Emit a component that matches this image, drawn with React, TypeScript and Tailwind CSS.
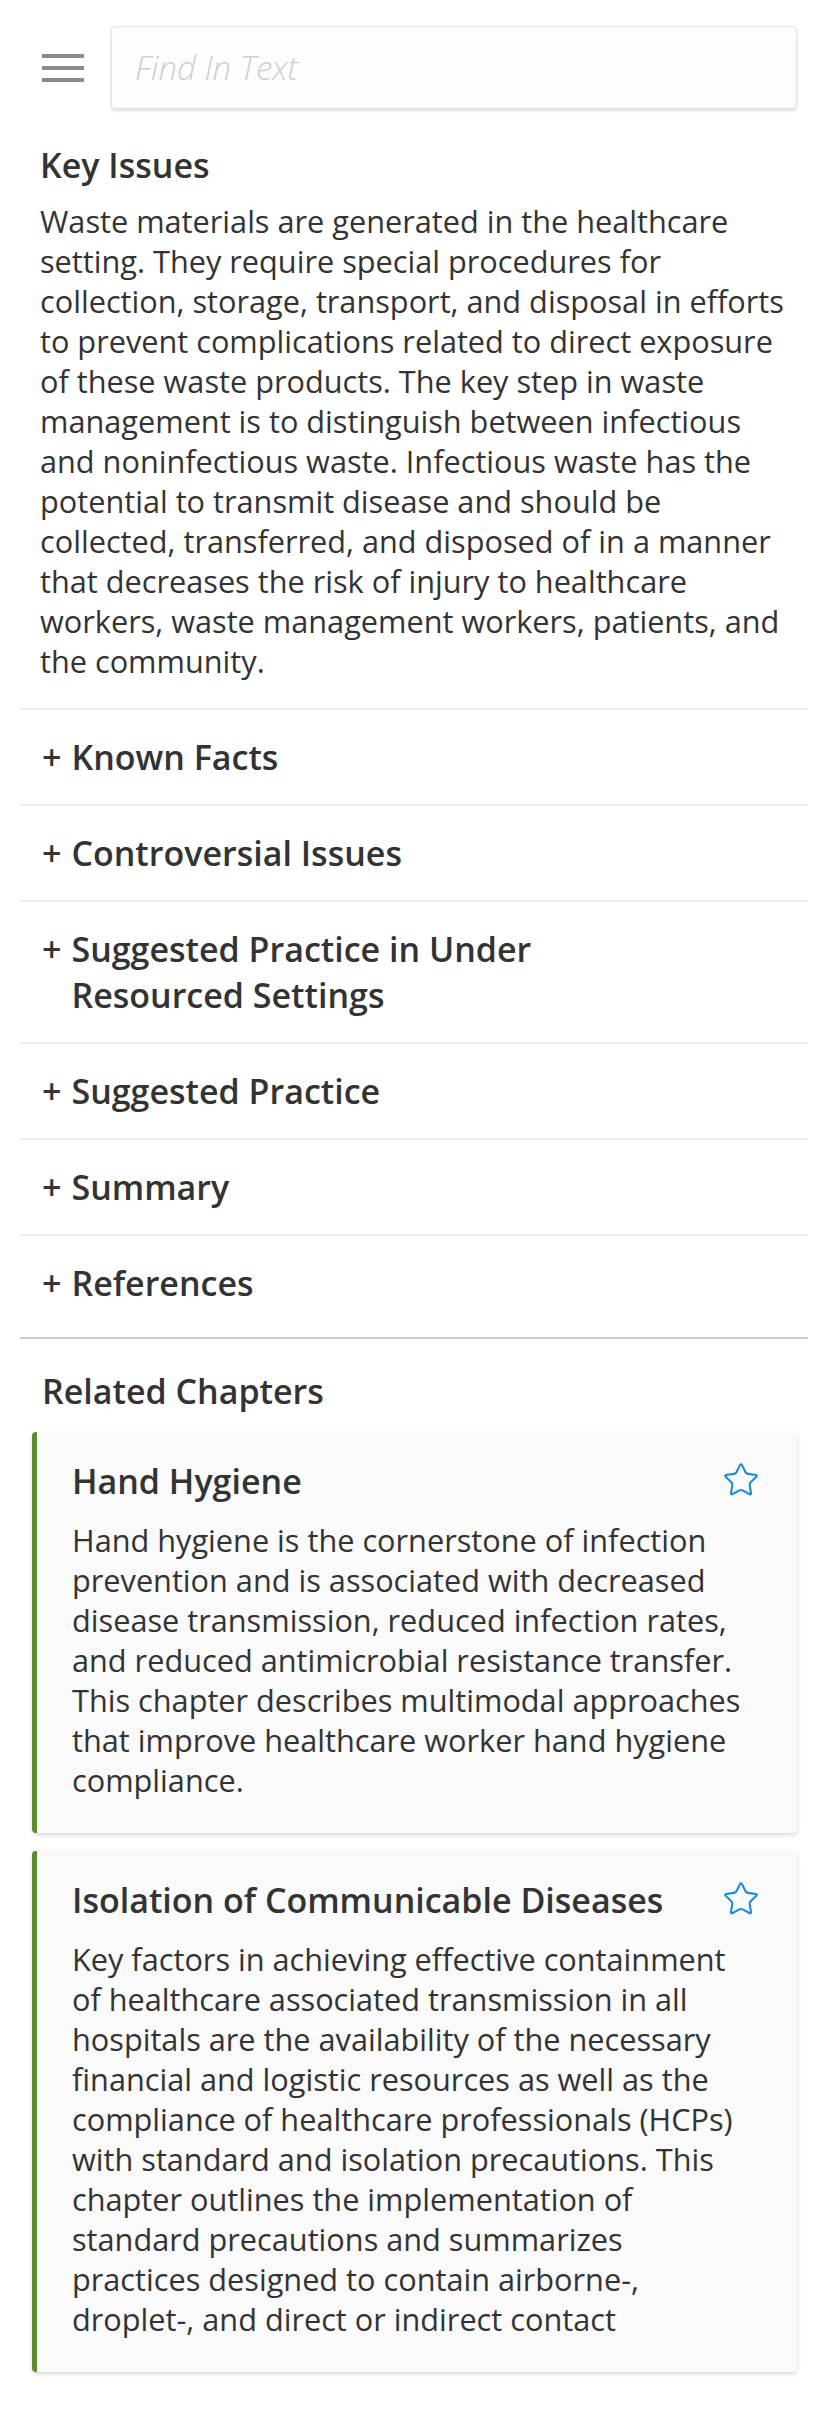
import { Star } from 'lucide-react';

const sections = [
  'Known Facts',
  'Controversial Issues',
  'Suggested Practice in Under Resourced Settings',
  'Suggested Practice',
  'Summary',
  'References',
];

const chapters = [
  {
    title: 'Hand Hygiene',
    body: 'Hand hygiene is the cornerstone of infection prevention and is associated with decreased disease transmission, reduced infection rates, and reduced antimicrobial resistance transfer. This chapter describes multimodal approaches that improve healthcare worker hand hygiene compliance.',
  },
  {
    title: 'Isolation of Communicable Diseases',
    body: 'Key factors in achieving effective containment of healthcare associated transmission in all hospitals are the availability of the necessary financial and logistic resources as well as the compliance of healthcare professionals (HCPs) with standard and isolation precautions. This chapter outlines the implementation of standard precautions and summarizes practices designed to contain airborne-, droplet-, and direct or indirect contact',
  },
];

function ChapterCard({ title, body }: { title: string; body: string }) {
  return (
    <div className="rounded-[4px] border-l-[5px] border-[#5b8c2a] bg-[#fafafa] pt-[27px] pr-[37px] pb-[33px] pl-[35px] shadow-[0_2px_4px_rgba(0,0,0,0.16)]">
      <div className="flex items-start justify-between gap-4">
        <h3 className="text-[34px] leading-[44px] font-semibold text-[#333]">{title}</h3>
        <Star size={38} strokeWidth={1.3} className="mt-[2px] shrink-0 text-[#1a8cd8]" />
      </div>
      <p className="mt-[17px] mr-[11px] text-[30.7px] leading-[40px] text-[#333]">{body}</p>
    </div>
  );
}

export default function App() {
  return (
    <div className="min-h-screen bg-white font-['Open_Sans',sans-serif] text-[#333]">
      <header className="flex items-center gap-[27px] pt-[26px] pr-[31px] pl-[42px]">
        <button className="flex w-[42px] flex-col gap-[8px]" aria-label="Menu">
          <span className="h-[4px] bg-[#8a8a8a]" />
          <span className="h-[4px] bg-[#8a8a8a]" />
          <span className="h-[4px] bg-[#8a8a8a]" />
        </button>
        <input
          placeholder="Find In Text"
          className="h-[83px] flex-1 rounded-[4px] border border-[#e3e3e3] bg-[#fdfdfd] px-[23px] text-[33px] shadow-[0_2px_3px_rgba(0,0,0,0.12)] outline-none placeholder:font-light placeholder:text-[#cfcfcf] placeholder:italic"
        />
      </header>

      <main className="px-[20px]">
        <section className="pt-[34px] pr-[14px] pb-[27px] pl-[20px]">
          <h2 className="text-[34px] leading-[44px] font-semibold">Key Issues</h2>
          <p className="mt-[14px] text-[30.7px] leading-[40px]">
            Waste materials are generated in the healthcare setting. They require special procedures for
            collection, storage, transport, and disposal in efforts to prevent complications related to direct
            exposure of these waste products. The key step in waste management is to distinguish between
            infectious and noninfectious waste. Infectious waste has the potential to transmit disease and should
            be collected, transferred, and disposed of in a manner that decreases the risk of injury to healthcare
            workers, waste management workers, patients, and the community.
          </p>
        </section>

        {sections.map((s, i) => (
          <div
            key={s}
            className={`flex gap-[10px] border-t-2 border-[#eeeeee] px-[22px] pt-[24px] text-[34px] leading-[46px] font-semibold ${
              i === sections.length - 1 ? 'pb-[31px]' : 'pb-[24px]'
            }`}
          >
            <span>+</span>
            <span className="max-w-[540px]">{s}</span>
          </div>
        ))}

        <div className="border-t-2 border-[#cccccc] px-[22px] pt-[30px]">
          <h2 className="text-[34px] leading-[44px] font-semibold">Related Chapters</h2>
        </div>

        <div className="mt-[19px] mr-[11px] ml-[12px] flex flex-col gap-[18px] pb-[44px]">
          {chapters.map((c) => (
            <ChapterCard key={c.title} title={c.title} body={c.body} />
          ))}
        </div>
      </main>
    </div>
  );
}
